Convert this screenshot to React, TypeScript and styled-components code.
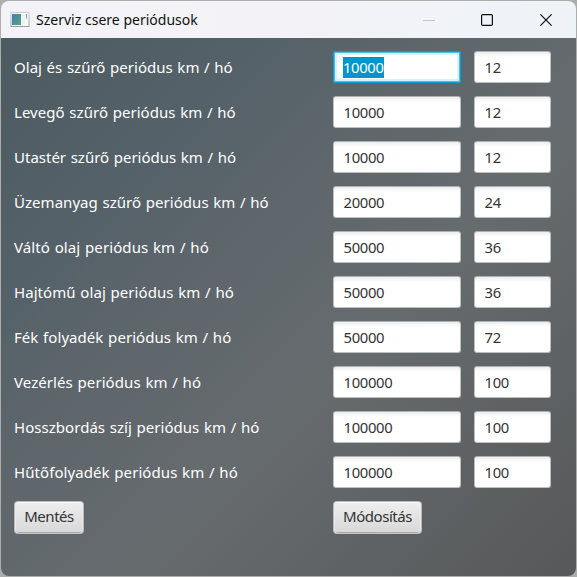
import React from "react";
import styled, { createGlobalStyle, css } from "styled-components";

const GlobalStyle = createGlobalStyle`
  * { box-sizing: border-box; }
  html, body { margin: 0; padding: 0; overflow: hidden; }
  body { background: #adadab; font-family: "Noto Sans", "Open Sans", sans-serif; }
`;

const Desktop = styled.div`
  width: 577px;
  height: 577px;
  padding: 1px;
  background: #adadab;
`;

const Window = styled.main`
  display: flex;
  flex-direction: column;
  width: 575px;
  height: 575px;
  border-radius: 8px;
  overflow: hidden;
`;

const TitleBar = styled.header`
  display: flex;
  align-items: center;
  flex: 0 0 37px;
  padding-left: 9px;
  background: linear-gradient(90deg, #f2f2f8, #f3f3f7 55%, #eef3f8);
`;

const Title = styled.h1`
  flex: 1;
  margin: 0 0 0 6px;
  color: #111;
  font-size: 14px;
  font-weight: 400;
  line-height: 20px;
  letter-spacing: 0.01px;
  white-space: nowrap;
`;

const WindowControls = styled.div`
  display: flex;
  padding-right: 7px;
`;

const ControlButton = styled.button`
  display: grid;
  place-items: center;
  width: 58px;
  height: 37px;
  padding: 0;
  border: 0;
  background: transparent;

  &:last-child { width: 46px; margin-left: 7px; }
`;

const Content = styled.form`
  display: flex;
  flex: 1;
  flex-direction: column;
  gap: 13px;
  padding: 13px;
  background: linear-gradient(135deg, #4c5b61 0%, #566269 26%, #5f676c 42%, #666b6e 59%, #606466 75%, #575859 100%);
`;

const Row = styled.div`
  display: grid;
  grid-template-columns: 319px 128px 90px;
  height: 32px;
  align-items: center;

  & > :nth-child(3) { margin-left: 13px; }
`;

const Label = styled.label<{ $spacing: number }>`
  color: #fff;
  font-size: 15px;
  line-height: 20px;
  letter-spacing: ${({ $spacing }) => $spacing}px;
  word-spacing: 0.7px;
  white-space: nowrap;
`;

const Field = styled.div<{ $width: number; $focused?: boolean }>`
  display: flex;
  align-items: center;
  width: ${({ $width }) => $width}px;
  height: 32px;
  padding-left: 9.6px;
  border: 1px solid #bdbfc0;
  border-top-color: #aeb1b2;
  border-radius: 3px;
  background: linear-gradient(#eeeeee, #fff 5px);
  color: #333;
  font-size: 14.8px;
  letter-spacing: -0.35px;
  line-height: 21px;

  ${({ $focused }) => $focused && css`
    padding-left: 9px;
    border-color: #039ed3;
    background: #fff;
    box-shadow: 0 0 1px 0 #039ed3, inset 0 0 0 1px #4dbce1, inset 0 0 0 3px #d9f1f9;
  `}
`;

const Value = styled.span<{ $selected?: boolean }>`
  display: block;
  height: 21px;
  ${({ $selected }) => $selected && css`
    background: #0096c9;
    color: #fff;
  `}
`;

const Button = styled.button<{ $width: number }>`
  width: ${({ $width }) => $width}px;
  height: 33px;
  padding: 0 0 2px;
  border: 1px solid #b9babb;
  border-bottom-color: #c5c6c7;
  border-radius: 4px;
  background: linear-gradient(#eeeeee, #d8d8d8);
  box-shadow: inset 0 1px #fafafa, inset 1px 0 #eaeaea, inset -1px 0 #eaeaea, inset 0 -1px #aaa;
  color: #333;
  font: 15px/21px "Noto Sans", "Open Sans", sans-serif;
  letter-spacing: -0.45px;
`;

const AppIcon = () => (
  <svg width="20" height="16" viewBox="0 0 20 16" aria-hidden="true">
    <defs>
      <linearGradient id="frame" x2="0" y2="1"><stop stopColor="#c8cbd0" /><stop offset="1" stopColor="#999da2" /></linearGradient>
      <linearGradient id="picture" x2="1" y2="1"><stop stopColor="#447cb1" /><stop offset="1" stopColor="#55a47c" /></linearGradient>
    </defs>
    <rect x="1" y=".5" width="18" height="14" fill="#f9fbfb" stroke="url(#frame)" />
    <rect x="2" y="2" width="9" height="11" fill="url(#picture)" />
    <path d="M12 3h3v9h-3z" fill="#eef1ee" />
    <path d="M16 2h1v6l-1-3z" fill="#55a091" />
  </svg>
);

const periods = [
  { name: "Olaj és szűrő periódus km / hó", km: "10000", months: "12", spacing: 0.02 },
  { name: "Levegő szűrő periódus km / hó", km: "10000", months: "12", spacing: 0.045 },
  { name: "Utastér szűrő periódus km / hó", km: "10000", months: "12", spacing: 0 },
  { name: "Üzemanyag szűrő periódus km / hó", km: "20000", months: "24", spacing: 0.04 },
  { name: "Váltó olaj periódus km / hó", km: "50000", months: "36", spacing: 0.1 },
  { name: "Hajtómű olaj periódus km / hó", km: "50000", months: "36", spacing: 0.07 },
  { name: "Fék folyadék periódus km / hó", km: "50000", months: "72", spacing: 0.06 },
  { name: "Vezérlés periódus km / hó", km: "100000", months: "100", spacing: 0.08 },
  { name: "Hosszbordás szíj periódus km / hó", km: "100000", months: "100", spacing: 0.04 },
  { name: "Hűtőfolyadék periódus km / hó", km: "100000", months: "100", spacing: 0.075 },
];

export default function App() {
  return (
    <>
      <GlobalStyle />
      <Desktop>
        <Window>
          <TitleBar>
            <AppIcon />
            <Title>Szerviz csere periódusok</Title>
            <WindowControls>
              <ControlButton type="button" aria-label="Minimize">
                <svg width="12" height="12"><path d="M0 6.5h12" stroke="#c3c5c8" /></svg>
              </ControlButton>
              <ControlButton type="button" aria-label="Maximize">
                <svg width="12" height="12"><rect x=".6" y=".6" width="10.8" height="10.8" rx="1.2" fill="none" stroke="#111" strokeWidth="1.2" /></svg>
              </ControlButton>
              <ControlButton type="button" aria-label="Close">
                <svg width="12" height="12"><path d="M.4.4l11.2 11.2M11.6.4L.4 11.6" stroke="#111" strokeWidth="1.2" /></svg>
              </ControlButton>
            </WindowControls>
          </TitleBar>
          <Content>
            {periods.map((period, index) => (
              <Row key={period.name}>
                <Label $spacing={period.spacing}>{period.name}</Label>
                <Field $width={128} $focused={index === 0}>
                  <Value $selected={index === 0}>{period.km}</Value>
                </Field>
                <Field $width={77}><Value>{period.months}</Value></Field>
              </Row>
            ))}
            <Row>
              <Button type="button" $width={70}>Mentés</Button>
              <Button type="button" $width={89}>Módosítás</Button>
            </Row>
          </Content>
        </Window>
      </Desktop>
    </>
  );
}
